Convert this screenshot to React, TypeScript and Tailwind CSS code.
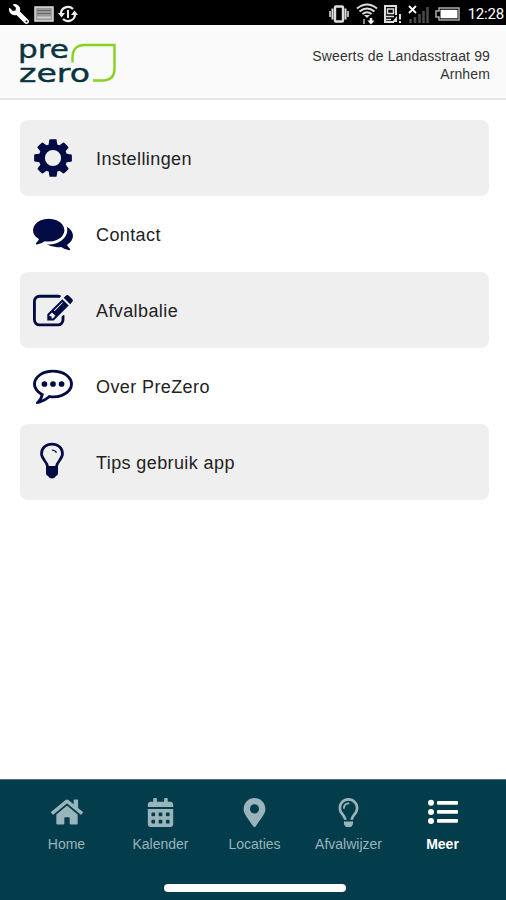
import React from 'react';
import { FaHome, FaCalendarAlt, FaMapMarkerAlt, FaRegLightbulb, FaWrench } from 'react-icons/fa';

const CogIcon = () => (
  <svg viewBox="0 0 1792 1792" className="w-[44px] h-[44px] shrink-0 mb-px" fill="currentColor">
    <path d="M1226 896a330 330 0 1 0-660 0 330 330 0 1 0 660 0zM1664 787v222q0 12-8 23t-20 13l-185 28q-19 54-39 91 35 50 107 138 10 12 10 25t-9 23q-27 37-99 108t-94 71q-12 0-26-9l-138-108q-44 23-91 38-16 136-29 186-7 28-36 28h-222q-14 0-24.5-8.5t-11.5-21.5l-28-184q-49-16-90-37l-141 107q-10 9-25 9-14 0-25-11-126-114-165-168-7-10-7-23 0-12 8-23 15-21 51-66.5t54-70.5q-27-50-41-99l-183-27q-13-2-21-12.5t-8-23.5v-222q0-12 8-23t19-13l186-28q14-46 39-92-40-57-107-138-10-12-10-24 0-10 9-23 26-36 98.5-107.5t94.5-71.5q13 0 26 10l138 107q44-23 91-38 16-136 29-186 7-28 36-28h222q14 0 24.5 8.5t11.5 21.5l28 184q49 16 90 37l142-107q9-9 24-9 13 0 25 10 129 119 165 170 7 8 7 22 0 12-8 23-15 21-51 66.5t-54 70.5q26 50 41 98l183 28q13 2 21 12.5t8 23.5z" />
  </svg>
);

const CommentsIcon = () => (
  <svg viewBox="0 0 1792 1792" className="w-10 h-10 shrink-0 mb-[3px]" fill="currentColor">
    <path d="M1408 768q0 139-94 257t-256.500 186.500-353.500 68.500q-86 0-176-16-124 88-278 128-36 9-86 16h-3q-11 0-20.500-8t-11.500-21q-1-3-1-6.500t.5-6.500 2-6l2.500-5 3.500-5.500 4-5 4.500-5 4-4.500q5-6 23-25t26-29.500 22.500-29 25-38.500 20.500-44q-124-72-195-177t-71-224q0-139 94-257t256.500-186.500 353.500-68.500 353.500 68.500 256.500 186.500 94 257zm384 256q0 120-71 224.500t-195 176.500q10 24 20.500 44t25 38.500 22.500 29 26 29.500 23 25q1 1 4 4.500t4.500 5 4 5 3.500 5.500l2.500 5 2 6 .5 6.500-1 6.500q-3 14-13 22t-22 7q-50-7-86-16-154-40-278-128-90 16-176 16-271 0-472-132 58 4 88 4 161 0 309-45t264-129q125-92 192-212t67-254q0-77-23-152 129 71 204 178t75 230z" />
  </svg>
);

const EditIcon = () => (
  <svg viewBox="0 0 1792 1792" className="w-10 h-10 shrink-0 mt-[3px]" fill="currentColor">
    <path d="M888 1184l116-116-152-152-116 116v56h96v96h56zm440-720q-16-16-33 1l-350 350q-17 17-1 33t33-1l350-350q17-17 1-33zm80 594v190q0 119-84.500 203.500t-203.500 84.500h-832q-119 0-203.500-84.500t-84.500-203.500v-832q0-119 84.500-203.500t203.500-84.500h832q63 0 117 25 15 7 18 23 3 17-9 29l-49 49q-14 14-32 8-23-6-45-6h-832q-66 0-113 47t-47 113v832q0 66 47 113t113 47h832q66 0 113-47t47-113v-126q0-13 9-22l64-64q15-15 35-7t20 29zm-96-738l288 288-672 672h-288v-288zm444 132l-92 92-288-288 92-92q28-28 68-28t68 28l152 152q28 28 28 68t-28 68z" />
  </svg>
);

const CommentIcon = () => (
  <svg viewBox="0 0 1792 1792" className="w-10 h-10 shrink-0 mb-[5px]" fill="currentColor">
    <circle cx="512" cy="896" r="128" />
    <circle cx="896" cy="896" r="128" />
    <circle cx="1280" cy="896" r="128" />
    <path d="M896 384q-204 0-381.500 69.500t-282 187.500-104.500 255q0 112 71.500 213.500t201.500 175.500l87 50-27 96q-24 91-70 172 152-63 275-171l43-38 57 6q69 8 130 8 204 0 381.500-69.500t282-187.500 104.500-255-104.500-255-282-187.500-381.500-69.500zm896 512q0 174-120 321.500t-326 233-450 85.500q-70 0-145-8-198 175-460 242-49 14-114 22h-5q-15 0-27-10.500t-16-27.500v-1q-3-4-.5-12t2-10 4.500-9.500l6-9 7-8.500 8-9q7-8 31-34.500t34.500-38 31-39.500 32.500-51 27-59 26-76q-157-89-247.500-220t-90.500-281q0-130 71-248.500t191-204.500 286-136.500 348-50.500 348 50.500 286 136.500 191 204.500 71 248.500z" />
  </svg>
);

const BulbIcon = () => (
  <svg viewBox="0 0 26 37" className="w-[26px] h-[37px] shrink-0 mb-[3px] mr-[2px]" fill="none" stroke="currentColor">
    <path d="M8.500 24.500C8.200 19.500 2.500 17.500 2.500 11.500C2.500 6 7 2.200 13 2.200S23.500 6 23.500 11.500C23.500 17.500 17.800 19.500 17.500 24.500" strokeWidth="2.700" />
    <path d="M12.800 8q3.600.2 4.700 2.800" strokeWidth="1.200" />
    <path d="M7 24h12v7.500q0 1.500-2 2.500-1.500 2.500-4 2.500t-4-2.500q-2-1-2-2.500z" fill="currentColor" stroke="none" />
  </svg>
);

const ListIcon = () => (
  <svg viewBox="0 0 30 26" className="w-[30px] h-[26px]" fill="currentColor">
    <circle cx="3" cy="3.800" r="3" />
    <circle cx="3" cy="12.900" r="3" />
    <circle cx="3" cy="22" r="3" />
    <rect x="9" y="2" width="21" height="3.800" rx="1" />
    <rect x="9" y="11" width="21" height="3.800" rx="1" />
    <rect x="9" y="20" width="21" height="3.800" rx="1" />
  </svg>
);

const Logo = () => (
  <svg viewBox="0 0 98 62" className="w-[98px] h-[62px]">
    <g fill="#07343d" stroke="#07343d" strokeWidth="0.400" fontFamily="DejaVu Sans, sans-serif" fontSize="25.500">
      <text x="-1" y="27" textLength="51" lengthAdjust="spacingAndGlyphs">pre</text>
      <text x="0" y="50.500" textLength="71" lengthAdjust="spacingAndGlyphs">zero</text>
    </g>
    <path d="M53.500 31.500v-5Q53.500 14 66 14H95.500v23.500Q95.500 49.500 83.500 49.500H74" fill="none" stroke="#86d31c" strokeWidth="2.400" />
  </svg>
);

const StatusBar = () => (
  <div className="flex h-[25px] items-center justify-between bg-black text-white">
    <div className="flex items-center pl-[9px] pt-[3px]">
      <FaWrench className="h-[20px] w-[20px] -scale-x-100" />
      <svg viewBox="0 0 20 16" className="ml-[5px] h-4 w-5">
        <rect x="1" y="1" width="18" height="14" fill="#999" stroke="#ddd" strokeWidth="1.500" />
        <path d="M3 4.500h14M3 7.500h14" stroke="#666" />
        <path d="M3 11.500h14" stroke="#ccc" strokeWidth="2" />
      </svg>
      <svg viewBox="0 0 20 18" className="ml-[4px] h-[18px] w-5" fill="none" stroke="#eee" strokeWidth="2.200">
        <path d="M3 8a7 6.500 0 0 1 12-4M17 10a7 6.500 0 0 1-12 4" />
        <path d="M0 8h7l-3.500 4.500zM13 10h7l-3.500-4.500z" fill="#eee" stroke="none" />
        <path d="M10 5v8" strokeWidth="2" />
      </svg>
    </div>
    <div className="flex items-center pt-[2px] pr-[2px]">
      <svg viewBox="0 0 20 18" className="h-[18px] w-5" fill="none" stroke="#ddd">
        <rect x="6" y="1.500" width="8" height="15" rx="1" strokeWidth="2.400" />
        <path d="M3.500 3.500v11M16.500 3.500v11" strokeWidth="2" />
        <path d="M1 6v6M19 6v6" strokeWidth="1.600" />
      </svg>
      <svg viewBox="0 0 22 22" className="ml-[7px] h-[22px] w-[22px]" fill="none" stroke="#ddd" strokeWidth="2">
        <path d="M1 5.500q10-8 20 0M3.500 8.500q7.500-6 15 0M6.500 11q4.500-3.500 9 0" />
        <path d="M8 12h6l-3 3z" fill="#ddd" stroke="none" />
        <path d="M8 21v-5" stroke="#888" />
        <path d="M15 15v4" stroke="#fff" strokeWidth="2.400" />
        <path d="M11.500 17.500h7l-3.500 4z" fill="#fff" stroke="none" />
      </svg>
      <svg viewBox="0 0 20 20" className="ml-[5px] h-5 w-5" fill="none" stroke="#ddd">
        <path d="M13 11V2H2v16h9" strokeWidth="2" />
        <path d="M4.500 5h6v4.500h-6z" strokeWidth="1.500" />
        <path d="M3 12.500h8M3 15.500h5" strokeWidth="1.500" />
        <path d="M9 18l5-6v6z" fill="#ddd" stroke="none" />
        <path d="M17 10v5.500M17 17v2" strokeWidth="2" />
      </svg>
      <svg viewBox="0 0 22 20" className="ml-[5px] h-5 w-[22px]">
        <path d="M1 2l7 7M8 2l-7 7" stroke="#fff" strokeWidth="1.800" />
        <path d="M2.500 19v-4M7 19v-6M11.500 19v-9M15.500 19V7M19.500 19V3" stroke="#484848" strokeWidth="2.600" />
      </svg>
      <svg viewBox="0 0 25 14" className="ml-[5px] h-[14px] w-[25px]">
        <path d="M4 1h20v12H4v-3H1V4h3z" fill="none" stroke="#aaa" strokeWidth="1.500" />
        <rect x="5.500" y="2.800" width="17" height="8.500" fill="#fff" />
      </svg>
      <span className="ml-[8px] pt-px font-[Roboto,sans-serif] text-[15px] leading-none tracking-[-0.2px]">12:28</span>
    </div>
  </div>
);

const menuItems = [
  { label: 'Instellingen', icon: <CogIcon /> },
  { label: 'Contact', icon: <CommentsIcon /> },
  { label: 'Afvalbalie', icon: <EditIcon /> },
  { label: 'Over PreZero', icon: <CommentIcon /> },
  { label: 'Tips gebruik app', icon: <BulbIcon /> },
];

const navItems = [
  { label: 'Home', icon: <FaHome className="h-[32px] w-[32px]" /> },
  { label: 'Kalender', icon: <FaCalendarAlt className="h-[29px] w-[29px]" /> },
  { label: 'Locaties', icon: <FaMapMarkerAlt className="h-[29px] w-[29px]" /> },
  { label: 'Afvalwijzer', icon: <FaRegLightbulb className="h-[29px] w-[29px]" /> },
  { label: 'Meer', icon: <ListIcon />, active: true },
];

const App = () => {
  return (
    <div className="flex h-[900px] w-[506px] flex-col bg-white font-['Liberation_Sans',Arial,sans-serif]">
      <StatusBar />
      <header className="flex h-[75px] items-start justify-between border-b-2 border-[#e8e8e8] bg-[#fafafa] pl-[19px] pr-4 pt-[6px]">
        <Logo />
        <div className="pt-[16px] text-right text-[14px] leading-[18px] tracking-[0.13px] text-[#333]">
          <p>Sweerts de Landasstraat 99</p>
          <p>Arnhem</p>
        </div>
      </header>

      <main className="flex-1 pl-5 pr-[17px] pt-5">
        <ul>
          {menuItems.map((item) => (
            <li key={item.label} className="flex h-[76px] items-center rounded-lg odd:bg-[#efefef]">
              <span className="flex w-[66px] justify-center text-[#030b45]">{item.icon}</span>
              <span className="pl-[10px] pt-[2px] text-[18px] tracking-[0.4px] text-[#222]">{item.label}</span>
            </li>
          ))}
        </ul>
      </main>

      <nav className="flex h-[121px] flex-col items-center justify-between border-t border-[#4d737c] bg-[#033c4a] pb-2 pl-[3px]">
        <ul className="flex w-[470px]">
          {navItems.map((item) => (
            <li
              key={item.label}
              className={item.active ? 'flex w-[94px] flex-col items-center pt-[16px] font-bold text-white' : 'flex w-[94px] flex-col items-center pt-[16px] text-[#9ab4bc]'}
            >
              <span className="flex h-[32px] items-center">{item.icon}</span>
              <span className="mt-[8px] text-[14px] leading-4">{item.label}</span>
            </li>
          ))}
        </ul>
        <div className="h-[8px] w-[182px] rounded-full bg-white" />
      </nav>
    </div>
  );
};

export default App;
